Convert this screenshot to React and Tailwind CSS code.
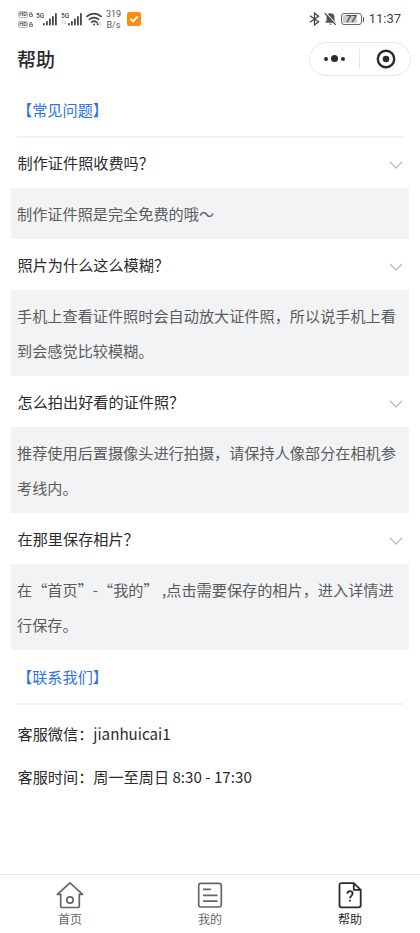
/**
 * 帮助页面
 */

const faqs = [
  { q: '制作证件照收费吗？', a: '制作证件照是完全免费的哦～' },
  { q: '照片为什么这么模糊？', a: '手机上查看证件照时会自动放大证件照，所以说手机上看到会感觉比较模糊。' },
  { q: '怎么拍出好看的证件照？', a: '推荐使用后置摄像头进行拍摄，请保持人像部分在相机参考线内。' },
  { q: '在那里保存相片？', a: '在“首页”-“我的” ,点击需要保存的相片，进入详情进行保存。' }
]

const HdBadge = () => (
  <div className="flex items-center gap-px h-[7px]">
    <span className="flex items-center justify-center w-[10px] h-[7px] rounded-[2px] border border-[#bbb] text-[5.5px] leading-none font-medium text-[#333]">HD</span>
    <svg width="4" height="5" viewBox="0 0 4 5" fill="none" stroke="#666" strokeWidth="0.9">
      <path d="M0.8 2.2V1.2a1 0.8 0 0 1 2 0v1M0.5 2.4h3v2h-3z" />
    </svg>
  </div>
)

const Signal = ({ data }) => (
  <div className="relative w-[21px] h-4">
    <span className="absolute left-0 top-[2px] text-[6.5px] leading-[6px] font-medium text-[#444]">5G</span>
    <svg className="absolute left-0 top-0" width="21" height="16" viewBox="0 0 21 16" fill="#444">
      {data && <path d="M1.5 13V9.5M0.5 10.5l1-1 1 1M4.5 9.5V13M3.5 12l1 1 1-1" stroke="#ccc" strokeWidth="0.8" fill="none" />}
      <rect x="7" y="12" width="1.8" height="2.5" rx="0.8" />
      <rect x="10" y="10" width="1.8" height="4.5" rx="0.8" />
      <rect x="13" y="7.5" width="1.8" height="7" rx="0.8" />
      <rect x="16" y="5" width="1.8" height="9.5" rx="0.8" />
      <rect x="19" y="2" width="1.8" height="12.5" rx="0.8" />
    </svg>
  </div>
)

const StatusBar = () => (
  <div className="flex items-start justify-between h-[38px] pl-[18px] pr-[19px] pt-[11px] font-[Roboto,sans-serif]">
    <div className="flex items-start">
      <div className="flex flex-col gap-[3px] w-[18px]">
        <HdBadge />
        <HdBadge />
      </div>
      <Signal />
      <div className="w-1" />
      <Signal data />
      <svg className="ml-1 mt-px" width="16" height="15" viewBox="0 0 16 15" fill="none" stroke="#444" strokeWidth="1.7" strokeLinecap="round">
        <path d="M1 4.4a10.3 10.3 0 0 1 14 0" />
        <path d="M3.4 7.4a6.8 6.8 0 0 1 9.2 0" />
        <path d="M5.7 10.2a3.6 3.6 0 0 1 4.6 0" />
        <circle cx="8" cy="12.6" r="1" fill="#444" stroke="none" />
        <path d="M11.7 10v3M10.7 12l1 1 1-1" strokeWidth="0.9" />
        <path d="M14.2 13v-3" stroke="#ccc" strokeWidth="0.9" />
      </svg>
      <div className="w-[15px] ml-[4px] -mt-[2px] text-center text-[9px] leading-[11px] text-[#555]">
        <div>319</div>
        <div>B/s</div>
      </div>
      <svg className="ml-[6px] mt-px" width="14" height="14" viewBox="0 0 14 14">
        <rect width="14" height="14" rx="2.5" fill="#ff8a0c" />
        <path d="M3.5 6.7l2.6 2.7 4.8-5" fill="none" stroke="#fff" strokeWidth="2" />
      </svg>
    </div>
    <div className="flex items-center h-4">
      <svg width="11" height="14" viewBox="0 0 11 14" fill="none" stroke="#444" strokeWidth="1.3">
        <path d="M1 3.8l8.5 6-4 3.2V1l4 3.2-8.5 6" />
      </svg>
      <svg className="ml-[4px]" width="13" height="14" viewBox="0 0 13 14">
        <path d="M6.5 1.3a4 4 0 0 1 4 4v3.5l1.5 2H1l1.5-2V5.3a4 4 0 0 1 4-4z" fill="#555" />
        <path d="M5 11.7h3l-1.5 1.3z" fill="#555" />
        <path d="M1.7 0.8l11 11.7" stroke="#fff" strokeWidth="1.2" />
        <path d="M0.7 1.2l11 11.7" stroke="#444" strokeWidth="1.2" />
      </svg>
      <div className="flex items-center ml-[4px] w-[24px] h-[13px]">
        <div className="relative w-[21px] h-[12px] rounded-[3px] border border-[#666] p-px">
          <div className="w-[14px] h-full bg-[#ccc] rounded-[1px]" />
          <span className="absolute inset-0 flex items-center justify-center text-[9.5px] font-bold italic leading-none text-[#444]">77</span>
        </div>
        <div className="w-[1.5px] h-[5px] ml-px bg-[#555] rounded-full" />
      </div>
      <span className="ml-[4px] text-[13px] leading-4 text-[#444]">11:37</span>
    </div>
  </div>
)

const Header = () => (
  <div className="flex items-center justify-between h-[42px] pl-[17px] pr-[9px]">
    <h1 className="text-[19px] leading-[38px] font-medium text-[#2b2b2b]">帮助</h1>
    <div className="flex items-center w-[102px] h-[34px] -mt-px rounded-full border border-[#e8e8e8]">
      <div className="flex-1 flex items-center justify-center gap-[3px]">
        <span className="w-1 h-1 rounded-full bg-[#2b2b2b]" />
        <span className="w-[7px] h-[7px] rounded-full bg-[#2b2b2b]" />
        <span className="w-1 h-1 rounded-full bg-[#2b2b2b]" />
      </div>
      <div className="w-px h-5 bg-[#e8e8e8]" />
      <div className="flex-1 flex justify-center pl-[2px]">
        <svg width="20" height="20" viewBox="0 0 20 20">
          <circle cx="10" cy="10" r="8.2" fill="none" stroke="#2b2b2b" strokeWidth="2.4" />
          <circle cx="10" cy="10" r="3.3" fill="#2b2b2b" />
        </svg>
      </div>
    </div>
  </div>
)

const SectionTitle = ({ children }) => (
  <div className="h-[55px] -mb-px mx-[17px] border-b-2 border-[#f1f1f1] text-[15.17px] leading-[53px] text-[#2f71ee]">
    {children}
  </div>
)

const FaqItem = ({ q, a }) => (
  <div className="mx-[11px]">
    <div className="flex items-center justify-between h-[51px] pl-[6.5px] pr-[6px] text-[#2b2b2b]">
      <span>{q}</span>
      <svg className="mt-[4px]" width="14" height="8" viewBox="0 0 14 8" fill="none" stroke="#b9b9b9" strokeWidth="1.3">
        <path d="M1 1l6 6 6-6" />
      </svg>
    </div>
    <div className="py-2 pl-[6px] pr-[10px] bg-[#f2f3f5] leading-[35px] text-[#5b5b5b]">{a}</div>
  </div>
)

const HomeIcon = () => (
  <svg width="28" height="28" viewBox="0 0 28 28" fill="none" stroke="#666" strokeWidth="1.7" strokeLinejoin="round" strokeLinecap="round">
    <path d="M4.7 13.4H1.4L14 1.8l12.6 11.6h-3.3v11.6a1.5 1.5 0 0 1-1.5 1.5H6.2a1.5 1.5 0 0 1-1.5-1.5z" />
    <circle cx="14" cy="19" r="3.2" />
  </svg>
)

const ListIcon = () => (
  <svg width="28" height="28" viewBox="0 0 28 28" fill="none" stroke="#666" strokeWidth="1.7">
    <rect x="2.7" y="2.4" width="22.6" height="23.6" rx="2.2" />
    <path d="M7 8.4h8M7 14.3h14.5M7 20.1h14.5" />
  </svg>
)

const HelpIcon = () => (
  <svg width="28" height="28" viewBox="0 0 28 28" fill="none" stroke="#2b2b2b" strokeWidth="1.8" strokeLinejoin="round">
    <path d="M17.8 2.1H5.5a2 2 0 0 0-2 2v20.2a2 2 0 0 0 2 2h17.2a2 2 0 0 0 2-2V8.8z" />
    <path d="M17.8 2.1v6.7h6.9" />
    <path d="M11.4 12.8c0-1.8 1.1-2.6 2.6-2.6s2.6 0.9 2.6 2.4c0 2.2-2.6 2.3-2.6 4.7" />
    <path d="M14 18.7v1.9" />
  </svg>
)

const tabs = [
  { name: '首页', Icon: HomeIcon, color: 'text-[#666]' },
  { name: '我的', Icon: ListIcon, color: 'text-[#666]' },
  { name: '帮助', Icon: HelpIcon, color: 'text-[#2b2b2b]' }
]

const TabBar = () => (
  <div className="flex h-[59px] border-t border-[#e4e4e4]">
    {tabs.map(({ name, Icon, color }) => (
      <div key={name} className={`flex-1 flex flex-col items-center pt-[6px] ${color}`}>
        <Icon />
        <span className="mt-[1px] text-[12px] leading-[18px]">{name}</span>
      </div>
    ))}
  </div>
)

const App = () => {
  return (
    <div lang="zh-CN" className="flex flex-col w-[420px] h-[933px] overflow-hidden bg-white font-['Noto_Sans_CJK_SC',sans-serif] text-[15.17px]">
      <StatusBar />
      <Header />
      <div className="flex-1 pt-[3px]">
        <SectionTitle>【常见问题】</SectionTitle>
        {faqs.map((item) => (
          <FaqItem key={item.q} q={item.q} a={item.a} />
        ))}
        <SectionTitle>【联系我们】</SectionTitle>
        <div className="pt-[8px] pl-[17.5px] leading-[43px] text-[#2b2b2b]">
          <p>客服微信：jianhuicai1</p>
          <p>客服时间：周一至周日 8:30 - 17:30</p>
        </div>
      </div>
      <TabBar />
    </div>
  )
}

export default App
